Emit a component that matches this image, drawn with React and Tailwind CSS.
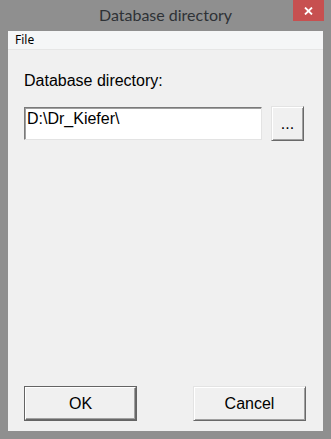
import React from "react";

const arial = { fontFamily: '"Liberation Sans", Arial, sans-serif' };

export default function App() {
  return (
    <div className="w-[331px] h-[439px] bg-[#8f8f8f] flex flex-col overflow-hidden">
      <div className="relative h-[31px] flex items-start justify-center shrink-0">
        <span
          className="mt-[5px] text-[16px] leading-[20px] text-[#2e3236]"
          style={{ fontFamily: 'Lato, "Noto Sans", sans-serif' }}
        >
          Database directory
        </span>
        <div className="absolute right-[7px] top-0 w-[31px] h-[21px] bg-[#c75050] flex items-center justify-center">
          <svg width="9" height="8" viewBox="0 0 9 8">
            <path d="M1 0.5 L8 7.5 M8 0.5 L1 7.5" stroke="#fff" strokeWidth="1.8" />
          </svg>
        </div>
      </div>
      <div className="mx-[8px] mb-[8px] flex-1 bg-[#f0f0f0] flex flex-col">
        <div
          className="h-[19px] bg-[#f5f6f7] border-b border-[#e6e6e6] pl-[7px] text-[12px] leading-[16px] text-black pt-[1px]"
          style={{ fontFamily: '"Noto Sans", "Open Sans", sans-serif' }}
        >
          File
        </div>
        <div className="flex-1 flex flex-col px-[16px]" style={arial}>
          <div className="mt-[22px] text-[16px] leading-[18px] text-black">Database directory:</div>
          <div className="mt-[16px] flex items-start">
            <div className="mt-px w-[238px] h-[33px] bg-white border border-t-[#7a7a7a] border-l-[#7a7a7a] border-b-[#e3e3e3] border-r-[#e3e3e3] shadow-[inset_1px_1px_0_#a0a0a0] pl-[2px] pt-[2px] text-[16px] leading-[18px] text-black">
              D:\Dr_Kiefer\
            </div>
            <div className="ml-[9px] w-[33px] h-[35px] bg-[#f0f0f0] border border-t-[#e3e3e3] border-l-[#e3e3e3] border-b-[#696969] border-r-[#696969] shadow-[inset_1px_1px_0_#ffffff,inset_-1px_-1px_0_#a0a0a0] flex items-center justify-center text-[16px] leading-[18px] text-black">
              ...
            </div>
          </div>
          <div className="mt-auto mb-[10px] flex justify-between pr-[1px]">
            <div className="w-[113px] h-[35px] border border-[#646464] bg-[#f0f0f0]">
              <div className="w-full h-full border border-t-[#ffffff] border-l-[#ffffff] border-b-[#696969] border-r-[#696969] shadow-[inset_-1px_-1px_0_#a0a0a0] flex items-center justify-center text-[16px] leading-[18px] text-black">
                OK
              </div>
            </div>
            <div className="w-[113px] h-[35px] bg-[#f0f0f0] border border-t-[#e3e3e3] border-l-[#e3e3e3] border-b-[#696969] border-r-[#696969] shadow-[inset_1px_1px_0_#ffffff,inset_-1px_-1px_0_#a0a0a0] flex items-center justify-center text-[16px] leading-[18px] text-black">
              Cancel
            </div>
          </div>
        </div>
      </div>
    </div>
  );
}
